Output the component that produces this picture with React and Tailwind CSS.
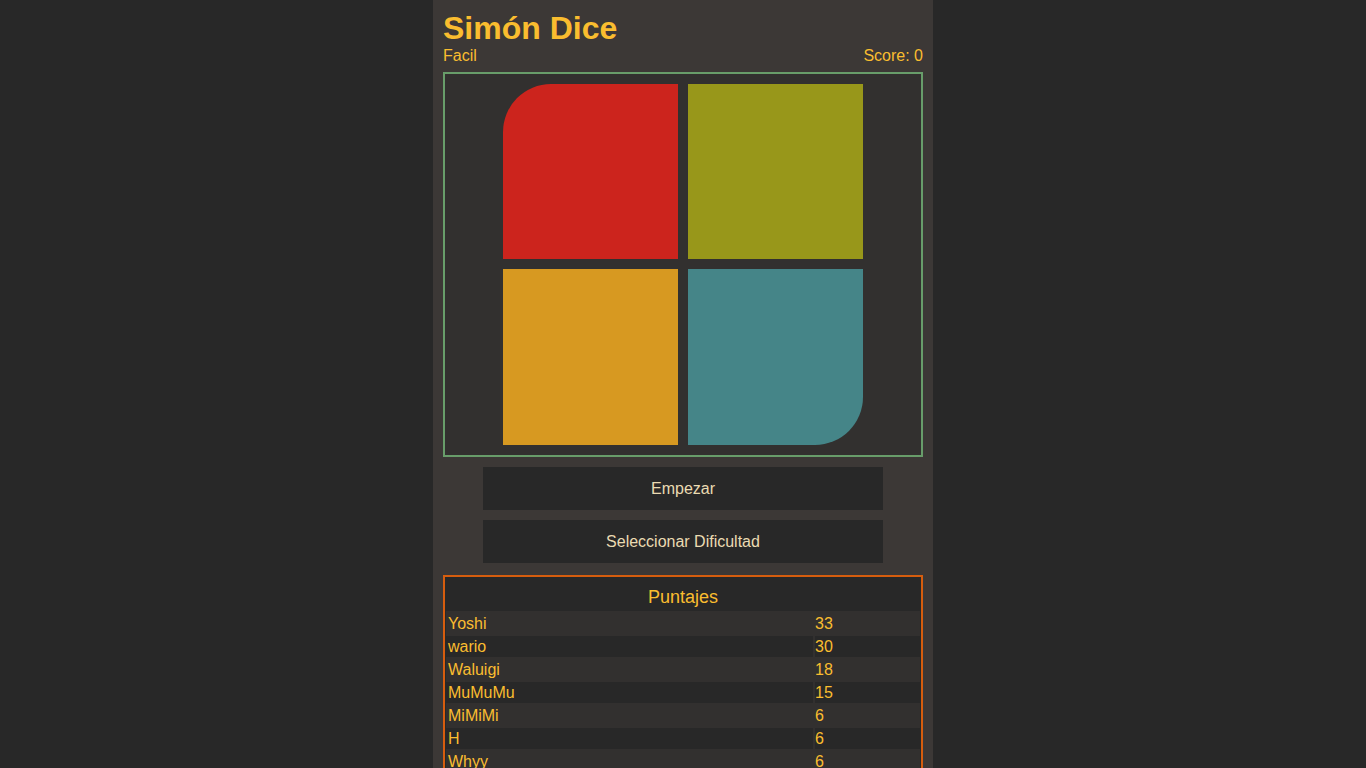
import React from 'react';

const scores = [
  { name: 'Yoshi', pts: 33 },
  { name: 'wario', pts: 30 },
  { name: 'Waluigi', pts: 18 },
  { name: 'MuMuMu', pts: 15 },
  { name: 'MiMiMi', pts: 6 },
  { name: 'H', pts: 6 },
  { name: 'Whyy', pts: 6 },
  { name: 'Toad', pts: 5 },
];

const App = () => (
  <div className="min-h-screen bg-[#282828] flex justify-center font-['Liberation_Sans',Arial,sans-serif]">
    <div className="w-[500px] min-h-screen bg-[#3c3836] p-[10px] text-[#fabd2f]">
      <h1 className="text-[32px] leading-[36px] font-bold">Simón Dice</h1>
      <div className="flex justify-between text-[16px] leading-[18px] pt-[1px]">
        <span>Facil</span>
        <span>Score: 0</span>
      </div>

      {/* tablero */}
      <div className="mt-[7px] border-2 border-[#689d6a] bg-[#32302f] py-[10px] flex justify-center">
        <div className="grid grid-cols-[175px_175px] grid-rows-[175px_176px] gap-[10px]">
          <div className="bg-[#cc241d] rounded-tl-[48px]" />
          <div className="bg-[#98971a]" />
          <div className="bg-[#d79921]" />
          <div className="bg-[#458588] rounded-br-[48px]" />
        </div>
      </div>

      <div className="flex flex-col items-center gap-[10px] mt-[10px]">
        <button className="w-[400px] h-[43px] bg-[#282828] text-[#ebdbb2] text-[16px]">Empezar</button>
        <button className="w-[400px] h-[43px] bg-[#282828] text-[#ebdbb2] text-[16px]">Seleccionar Dificultad</button>
      </div>

      <div className="mt-[12px] border-2 border-[#d65d0e] bg-[#282828] px-[1px]">
        <div className="h-[34px] flex items-center justify-center text-[18px] pt-[7px]">Puntajes</div>
        <div className="bg-[#32302f] flex flex-col gap-[2px] py-[2px]">
          {scores.map((s, i) => (
            <div key={s.name} className="flex gap-[2px] h-[21px] text-[16px] leading-[21px]">
              <div className={`flex-1 px-[2px] ${i % 2 === 1 ? 'bg-[#282828]' : ''}`}>{s.name}</div>
              <div className={`w-[105px] ${i % 2 === 1 ? 'bg-[#282828]' : ''}`}>{s.pts}</div>
            </div>
          ))}
        </div>
      </div>
    </div>
  </div>
);

export default App;
